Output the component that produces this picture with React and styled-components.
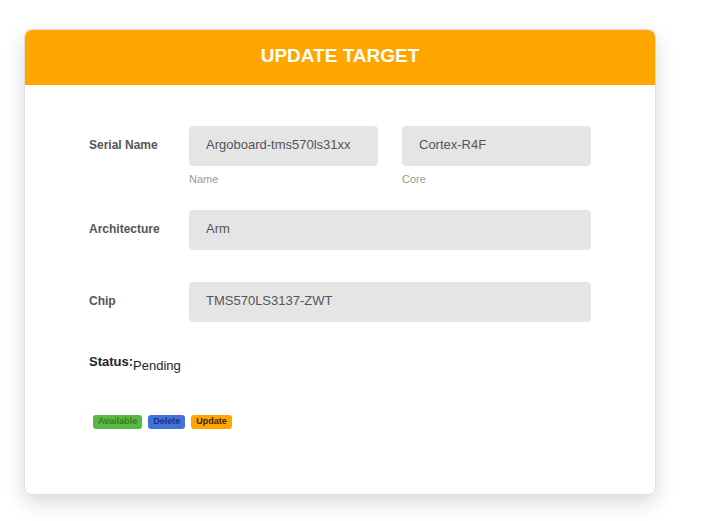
import React from "react";
import styled, { createGlobalStyle } from "styled-components";

const GlobalStyle = createGlobalStyle`
  * { box-sizing: border-box; }
  body {
    margin: 0;
    background: #fff;
    color: #212529;
    font-family: "Liberation Sans", Arial, sans-serif;
  }
`;

const Page = styled.main`
  padding: 29px 53px 26px 24px;
`;

const Card = styled.section`
  border: 1px solid #dfdfdf;
  border-radius: 8px;
  background: #fff;
  overflow: hidden;
  box-shadow: 0 8px 20px rgba(0, 0, 0, 0.15);
`;

const Header = styled.header`
  display: flex;
  align-items: center;
  justify-content: center;
  min-height: 55px;
  padding-bottom: 4px;
  background: #ffa500;
`;

const Title = styled.h1`
  margin: 0;
  font-size: 19px;
  line-height: 24px;
  color: #fff;
`;

const Form = styled.form`
  padding: 41px 64px 65px;
`;

const Row = styled.div`
  display: grid;
  grid-template-columns: 100px 1fr;
  margin-bottom: ${(p) => p.$gap}px;
`;

const Label = styled.label`
  padding-top: 10px;
  font-size: 12px;
  line-height: 18px;
  font-weight: 700;
  color: #555;
`;

const Fields = styled.div`
  display: grid;
  grid-template-columns: ${(p) => (p.$split ? "1fr 1fr" : "1fr")};
  gap: 24px;
`;

const Field = styled.div`
  display: flex;
  flex-direction: column;
  min-width: 0;
`;

const Input = styled.input`
  width: 100%;
  height: 40px;
  padding: 0 17px 3px;
  border: 0;
  border-radius: 4px;
  background: #e5e5e5;
  color: #555;
  font: 13px "Liberation Sans", Arial, sans-serif;
`;

const Hint = styled.label`
  margin-top: 6px;
  font-size: 11px;
  line-height: 14px;
  color: #999;
`;

const Status = styled.p`
  display: flex;
  align-items: flex-start;
  margin: 0 0 41px;
  font-size: 13px;
  line-height: 16px;
`;

const StatusValue = styled.span`
  padding-top: 4px;
`;

const Actions = styled.div`
  display: flex;
  gap: 6px;
  padding-left: 4px;
`;

const Button = styled.button`
  height: 14px;
  padding: 0 5px 2px;
  border: 0;
  border-radius: 3px;
  background: ${(p) => p.$bg};
  color: ${(p) => p.$fg};
  font: bold 9px/12px "Liberation Sans", Arial, sans-serif;
`;

export default function App() {
  return (
    <>
      <GlobalStyle />
      <Page>
        <Card>
          <Header>
            <Title>UPDATE TARGET</Title>
          </Header>
          <Form>
            <Row $gap={24}>
              <Label htmlFor="name">Serial Name</Label>
              <Fields $split>
                <Field>
                  <Input id="name" defaultValue="Argoboard-tms570ls31xx" />
                  <Hint htmlFor="name">Name</Hint>
                </Field>
                <Field>
                  <Input id="core" defaultValue="Cortex-R4F" />
                  <Hint htmlFor="core">Core</Hint>
                </Field>
              </Fields>
            </Row>
            <Row $gap={32}>
              <Label htmlFor="architecture">Architecture</Label>
              <Input id="architecture" defaultValue="Arm" />
            </Row>
            <Row $gap={32}>
              <Label htmlFor="chip">Chip</Label>
              <Input id="chip" defaultValue="TMS570LS3137-ZWT" />
            </Row>
            <Status>
              <strong>Status:</strong>
              <StatusValue>Pending</StatusValue>
            </Status>
            <Actions>
              <Button type="button" $bg="#57b846" $fg="#3f7a18">Available</Button>
              <Button type="button" $bg="#4272d7" $fg="#1c2f85">Delete</Button>
              <Button type="submit" $bg="#ffa500" $fg="#3d2408">Update</Button>
            </Actions>
          </Form>
        </Card>
      </Page>
    </>
  );
}
